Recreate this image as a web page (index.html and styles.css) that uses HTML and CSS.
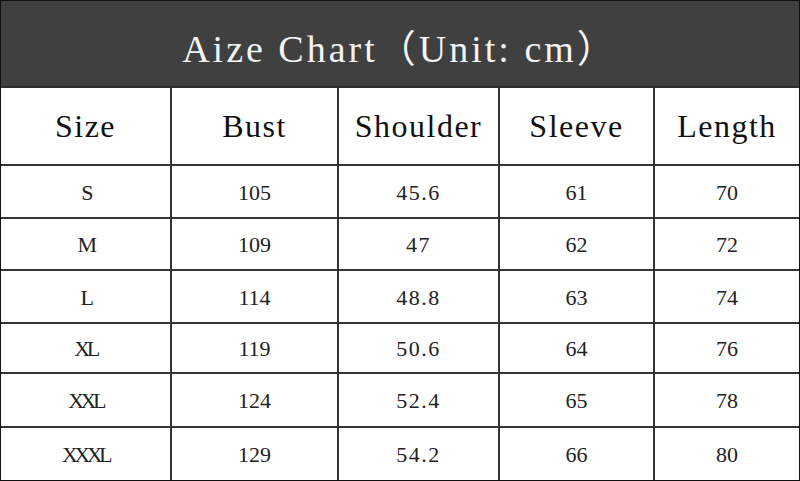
FILE: index.html
```html
<!DOCTYPE html>
<html lang="en">
<head>
<meta charset="utf-8">
<title>Size Chart</title>
<link rel="stylesheet" href="styles.css">
</head>
<body>
<div class="sheet">
  <div class="title">Aize Chart（Unit: cm）</div>
  <div class="chart">
    <div class="cell head">Size</div>
    <div class="cell head">Bust</div>
    <div class="cell head">Shoulder</div>
    <div class="cell head">Sleeve</div>
    <div class="cell head">Length</div>

    <div class="cell size">S</div>
    <div class="cell">105</div>
    <div class="cell dec">45.6</div>
    <div class="cell">61</div>
    <div class="cell">70</div>

    <div class="cell size">M</div>
    <div class="cell">109</div>
    <div class="cell dec">47</div>
    <div class="cell">62</div>
    <div class="cell">72</div>

    <div class="cell size">L</div>
    <div class="cell">114</div>
    <div class="cell dec">48.8</div>
    <div class="cell">63</div>
    <div class="cell">74</div>

    <div class="cell size">XL</div>
    <div class="cell">119</div>
    <div class="cell dec">50.6</div>
    <div class="cell">64</div>
    <div class="cell">76</div>

    <div class="cell size">XXL</div>
    <div class="cell">124</div>
    <div class="cell dec">52.4</div>
    <div class="cell">65</div>
    <div class="cell">78</div>

    <div class="cell size">XXXL</div>
    <div class="cell">129</div>
    <div class="cell dec">54.2</div>
    <div class="cell">66</div>
    <div class="cell">80</div>
  </div>
</div>
</body>
</html>
```

FILE: styles.css
```css
html, body {
  margin: 0;
  padding: 0;
  background: #ffffff;
}

.sheet {
  width: 800px;
  height: 481px;
  box-sizing: border-box;
  border: 1px solid #111111;
  background: #2e2e2e;
  display: flex;
  flex-direction: column;
  gap: 2px;
  overflow: hidden;
}

.title {
  height: 85px;
  flex: none;
  background: #404040;
  color: #f4f4f4;
  font-family: "Liberation Serif", "Noto Sans CJK SC", serif;
  font-size: 38px;
  letter-spacing: 3px;
  display: flex;
  align-items: center;
  justify-content: center;
  padding-top: 4px;
  box-sizing: border-box;
}

.chart {
  display: grid;
  grid-template-columns: 169px 165px 159px 153px 144px;
  grid-template-rows: 76px 51px 50px 51px 48px 52px 52px;
  gap: 2px;
  background: #333333;
}

.cell {
  background: #ffffff;
  display: flex;
  align-items: center;
  justify-content: center;
  font-family: "Liberation Serif", serif;
  font-size: 22px;
  color: #222222;
  padding-top: 2px;
  box-sizing: border-box;
}

.head {
  font-size: 32px;
  letter-spacing: 1.5px;
  color: #111111;
  padding-top: 0;
}

.size {
  letter-spacing: -3.5px;
}

.dec {
  letter-spacing: 1.5px;
}
```
